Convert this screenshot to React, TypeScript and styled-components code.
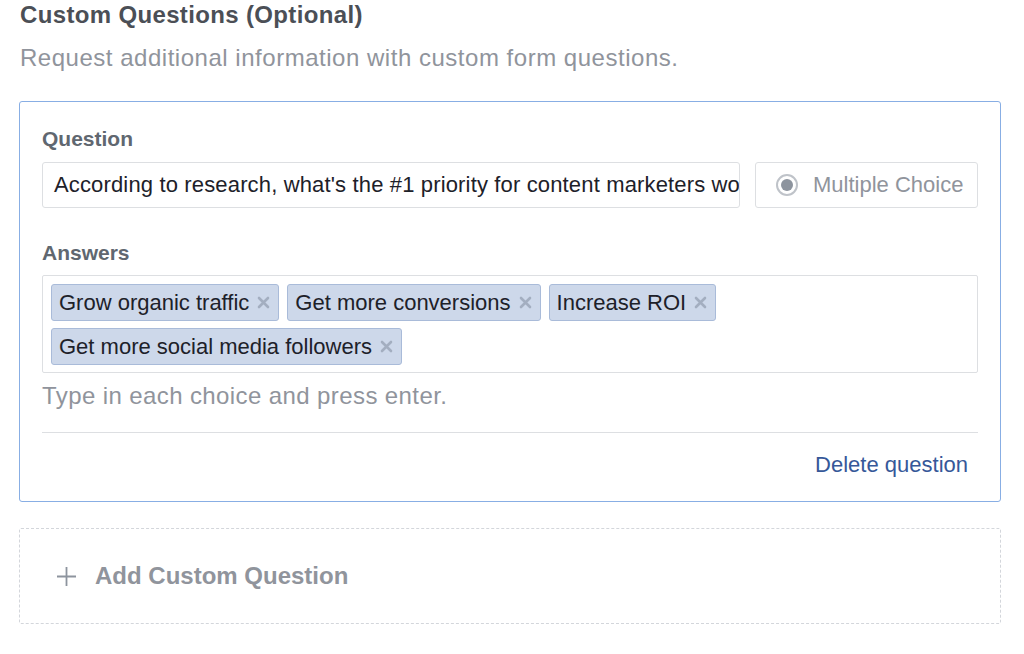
import React from "react";
import styled, { createGlobalStyle } from "styled-components";

const GlobalStyle = createGlobalStyle`
  html, body { margin: 0; padding: 0; background: #ffffff; }
  body { font-family: "Liberation Sans", Arial, sans-serif; -webkit-font-smoothing: antialiased; }
  * { box-sizing: border-box; }
`;

const Page = styled.div`
  width: 1024px;
  height: 654px;
  padding: 1px 23px 0 19px;
  overflow: hidden;
`;

const Title = styled.h2`
  margin: 0 0 0 1px;
  font-size: 24px;
  line-height: 28px;
  font-weight: 700;
  letter-spacing: 0.35px;
  color: #4b4f56;
`;

const Description = styled.p`
  margin: 15px 0 0 1px;
  font-size: 24px;
  line-height: 28px;
  letter-spacing: 0.52px;
  color: #90949c;
`;

const Card = styled.div`
  margin-top: 29px;
  border: 1px solid #88aee4;
  border-radius: 3px;
  padding: 25px 22px 23px 22px;
  display: flex;
  flex-direction: column;
`;

const Label = styled.div<{ $top?: number }>`
  margin-top: ${(p) => p.$top ?? 0}px;
  font-size: 21px;
  line-height: 24px;
  font-weight: 700;
  color: #606770;
`;

const QuestionRow = styled.div`
  margin-top: 11px;
  display: flex;
  gap: 15px;
`;

const TextInput = styled.div`
  flex: 1;
  min-width: 0;
  height: 46px;
  border: 1px solid #dddfe2;
  border-radius: 3px;
  padding: 0 0 0 11px;
  display: flex;
  align-items: center;
  font-size: 22px;
  letter-spacing: 0.15px;
  color: #1d2129;
  white-space: nowrap;
  overflow: hidden;
`;

const TypeSelect = styled.div`
  flex: none;
  width: 223px;
  height: 46px;
  border: 1px solid #dddfe2;
  border-radius: 3px;
  padding: 0 0 0 20px;
  display: flex;
  align-items: center;
  gap: 15px;
  font-size: 22px;
  color: #90949c;
  white-space: nowrap;
`;

const Radio = styled.span`
  flex: none;
  width: 22px;
  height: 22px;
  border-radius: 50%;
  border: 2px solid #bfc3c9;
  display: flex;
  align-items: center;
  justify-content: center;
  &::after {
    content: "";
    width: 12px;
    height: 12px;
    border-radius: 50%;
    background: #8d949e;
  }
`;

const AnswerBox = styled.div`
  margin-top: 10px;
  border: 1px solid #dddfe2;
  border-radius: 2px;
  padding: 8px 8px 7px 8px;
  display: flex;
  flex-wrap: wrap;
  gap: 7px 8px;
`;

const Tag = styled.span`
  height: 37px;
  border: 1px solid #a9bbd9;
  border-radius: 3px;
  background: #cdd8ea;
  padding: 0 8px 0 7px;
  display: inline-flex;
  align-items: center;
  gap: 8px;
  font-size: 22px;
  color: #1d2129;
  white-space: nowrap;
`;

const TagRemove = styled.svg`
  flex: none;
  width: 13px;
  height: 13px;
`;

const Hint = styled.div`
  margin-top: 9px;
  font-size: 24px;
  line-height: 28px;
  letter-spacing: 0.4px;
  color: #90949c;
`;

const Divider = styled.hr`
  margin: 22px 0 0 0;
  border: none;
  border-top: 1px solid #dddfe2;
`;

const Footer = styled.div`
  margin-top: 19px;
  display: flex;
  justify-content: flex-end;
  padding-right: 10px;
`;

const LinkButton = styled.span`
  font-size: 22px;
  line-height: 26px;
  color: #365899;
`;

const AddBox = styled.div`
  margin-top: 26px;
  height: 96px;
  border: 1px dashed #d3d6db;
  border-radius: 2px;
  padding-left: 37px;
  display: flex;
  align-items: center;
  gap: 19px;
  font-size: 24px;
  font-weight: 700;
  color: #90949c;
`;

const answers = [
  "Grow organic traffic",
  "Get more conversions",
  "Increase ROI",
  "Get more social media followers",
];

export default function App() {
  return (
    <>
      <GlobalStyle />
      <Page>
        <Title>Custom Questions (Optional)</Title>
        <Description>Request additional information with custom form questions.</Description>
        <Card>
          <Label>Question</Label>
          <QuestionRow>
            <TextInput>According to research, what's the #1 priority for content marketers working</TextInput>
            <TypeSelect>
              <Radio />
              Multiple Choice
            </TypeSelect>
          </QuestionRow>
          <Label $top={33}>Answers</Label>
          <AnswerBox>
            {answers.map((a) => (
              <Tag key={a}>
                {a}
                <TagRemove viewBox="0 0 13 13">
                  <path d="M2 2l9 9M11 2l-9 9" stroke="#a3aec0" strokeWidth="2.6" strokeLinecap="round" />
                </TagRemove>
              </Tag>
            ))}
          </AnswerBox>
          <Hint>Type in each choice and press enter.</Hint>
          <Divider />
          <Footer>
            <LinkButton>Delete question</LinkButton>
          </Footer>
        </Card>
        <AddBox>
          <svg width="19" height="19" viewBox="0 0 19 19">
            <path d="M9.5 0v19M0 9.5h19" stroke="#8d949e" strokeWidth="1.8" />
          </svg>
          Add Custom Question
        </AddBox>
      </Page>
    </>
  );
}
